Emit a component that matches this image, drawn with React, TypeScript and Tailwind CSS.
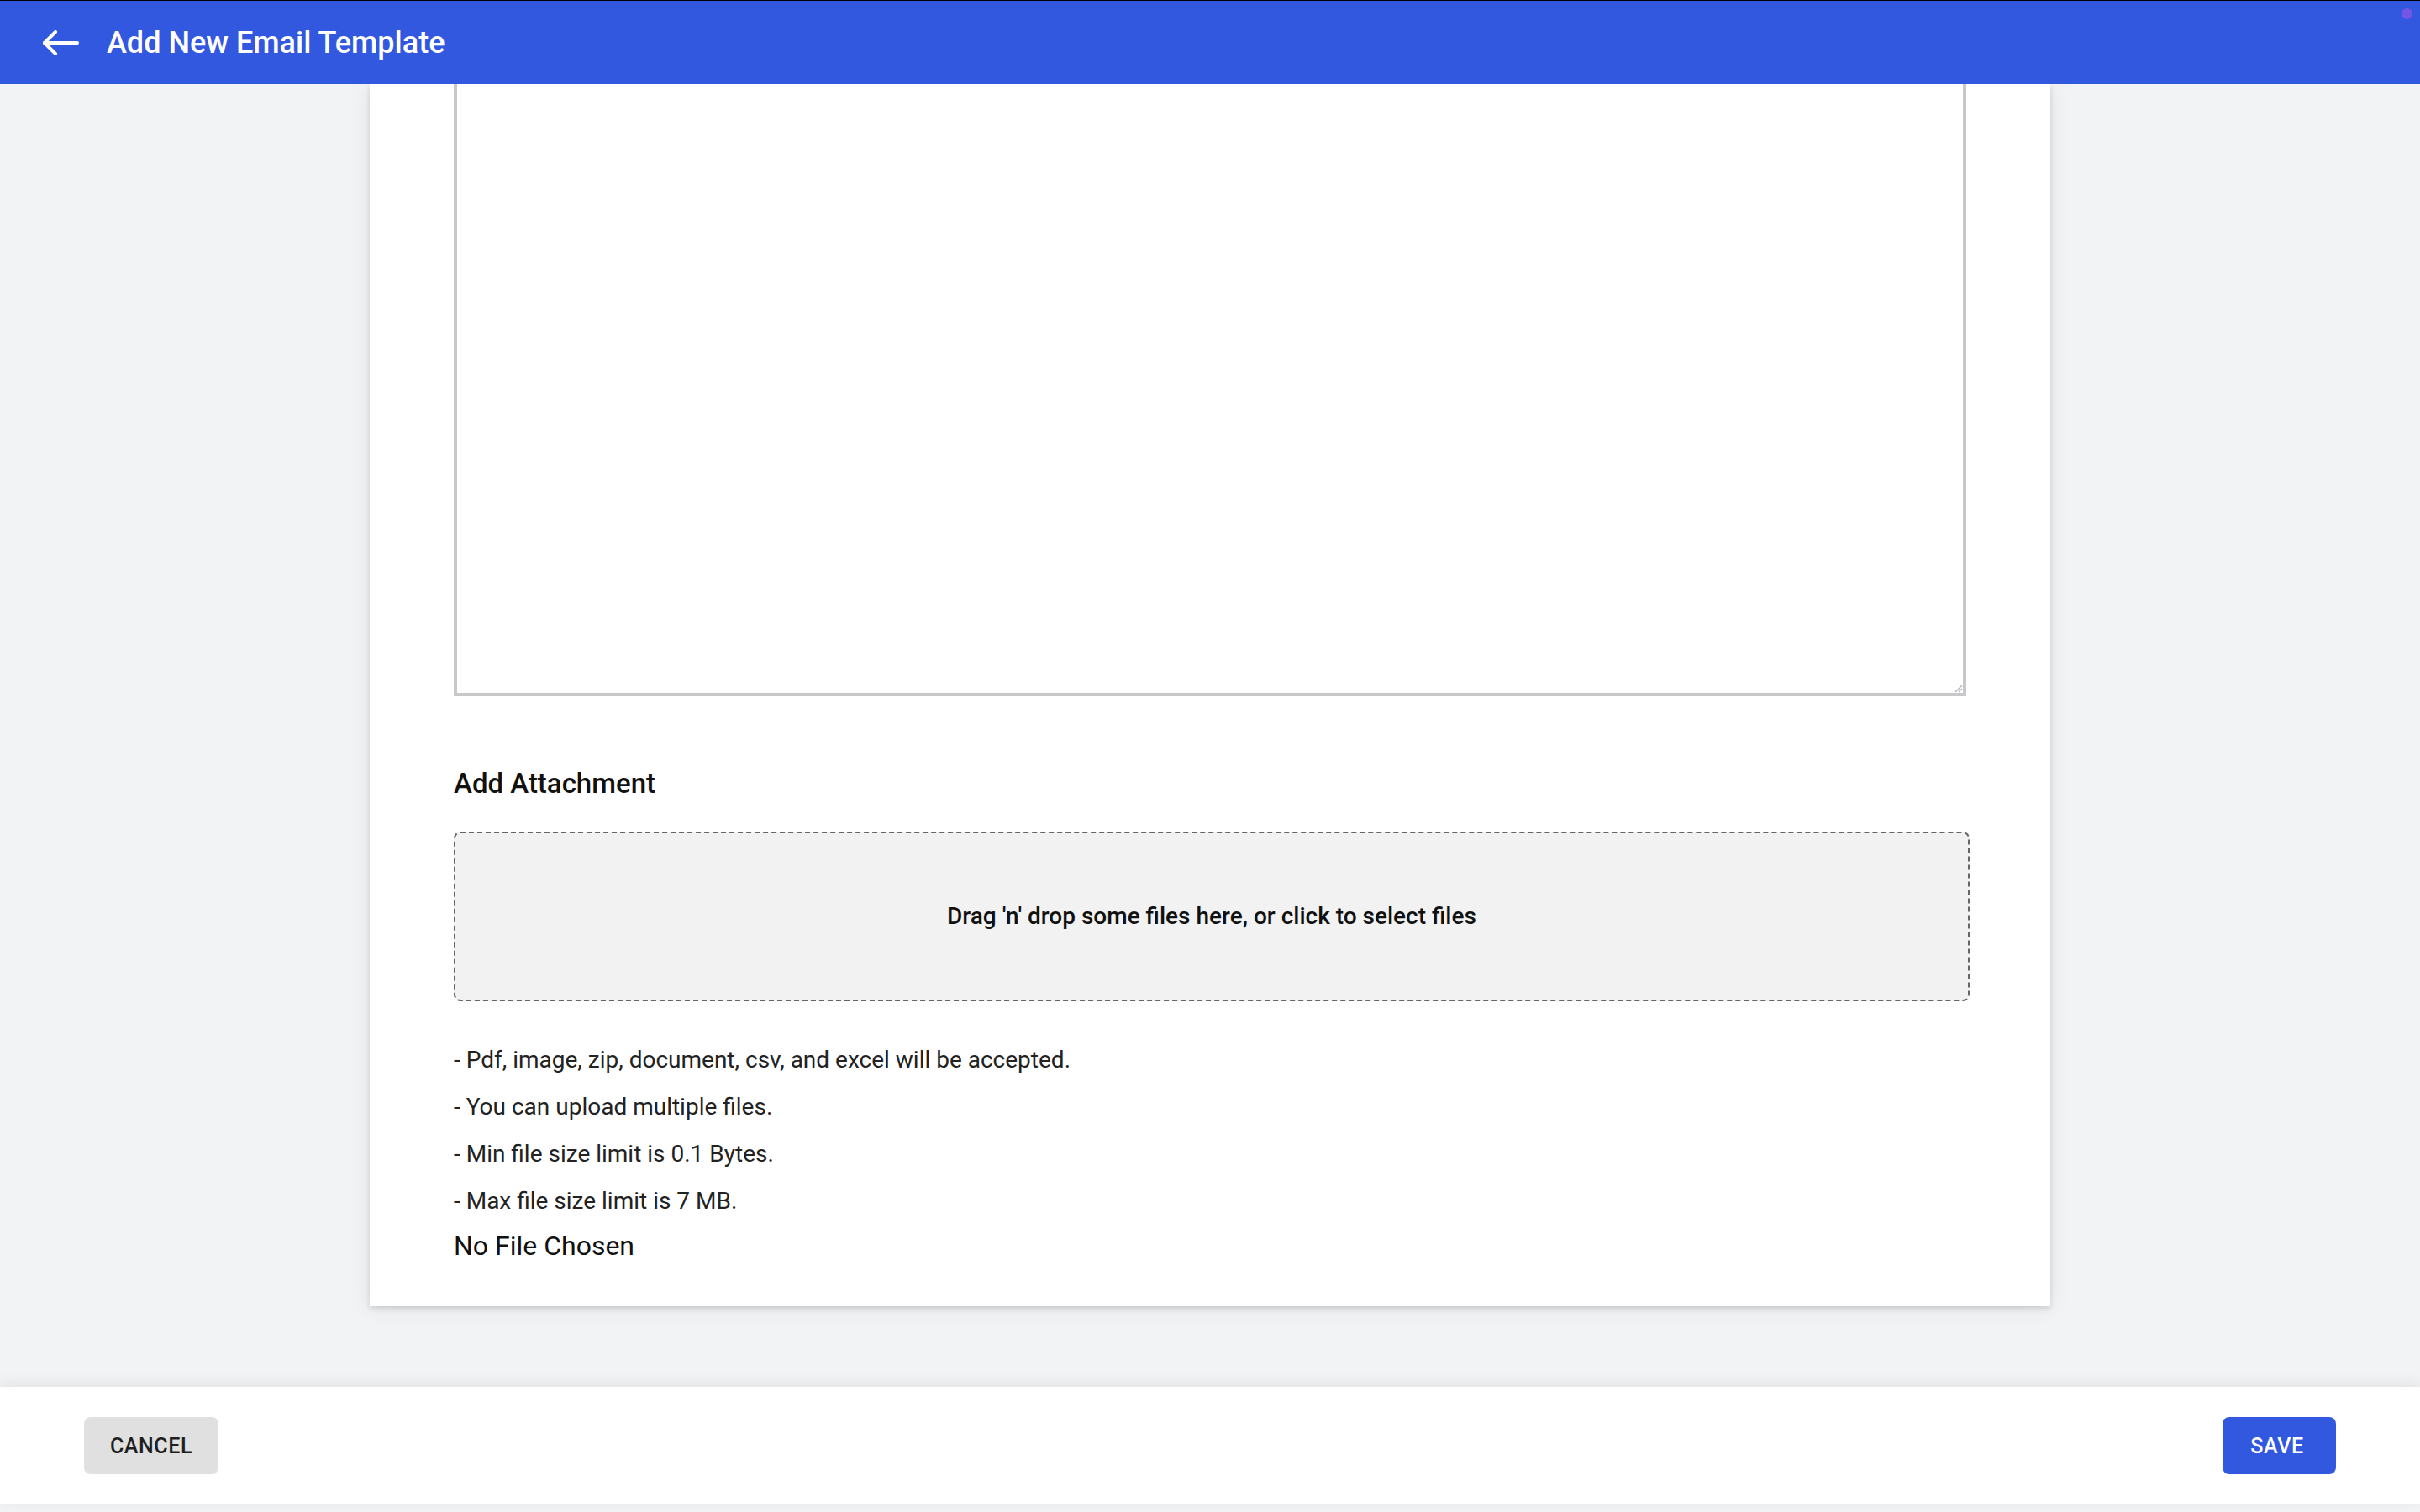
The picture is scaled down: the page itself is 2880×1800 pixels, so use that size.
import React from "react";

function BackArrow() {
  return (
    <svg width="44" height="30" viewBox="0 0 44 30" fill="none" stroke="white" strokeWidth="4" strokeLinecap="round" strokeLinejoin="round">
      <path d="M42 15H3" />
      <path d="M16 2L3 15L16 28" />
    </svg>
  );
}

function ResizeHandle() {
  return (
    <svg width="12" height="12" viewBox="0 0 12 12" stroke="#b5b5b8" strokeWidth="1.5" fill="none">
      <path d="M11 3L3 11" />
      <path d="M11 7L7 11" />
    </svg>
  );
}

export default function App() {
  const bullets = [
    "- Pdf, image, zip, document, csv, and excel will be accepted.",
    "- You can upload multiple files.",
    "- Min file size limit is 0.1 Bytes.",
    "- Max file size limit is 7 MB.",
  ];
  return (
    <div className="w-[2880px] h-[1800px] flex flex-col bg-[#f2f3f5] overflow-hidden font-['Roboto','Liberation_Sans',sans-serif]">
      <header className="relative z-20 h-[100px] shrink-0 bg-[#3358e0] border-t border-black flex items-center">
        <div className="ml-[50px] flex items-center">
          <BackArrow />
        </div>
        <h1 className="ml-[33px] text-white text-[36px] font-medium leading-none">Add New Email Template</h1>
        <span className="absolute right-[9px] top-[9px] w-[13px] h-[13px] rounded-full bg-[#7357e4]" />
      </header>

      <main className="relative z-0 flex-1 min-h-0 overflow-hidden">
        <div className="w-[2000px] mx-auto bg-white px-[100px] pb-[48px] shadow-[0_3px_6px_rgba(0,0,0,0.12),0_2px_24px_rgba(0,0,0,0.08)]">
          <div className="relative h-[729px] border-x-4 border-b-4 border-[#c8c8cb]">
            <span className="absolute right-0 bottom-0">
              <ResizeHandle />
            </span>
          </div>

          <h2 className="mt-[80px] text-[33px] leading-[48px] font-medium text-[#111]">Add Attachment</h2>

          <div className="mt-[33px] w-[1804px] h-[202px] rounded-[8px] border-2 border-dashed border-[#666] bg-[#f2f2f2] flex items-center justify-center">
            <p className="text-[28px] font-medium text-[#111]">Drag 'n' drop some files here, or click to select files</p>
          </div>

          <ul className="mt-[42px]">
            {bullets.map((b) => (
              <li key={b} className="text-[28px] leading-[56px] text-[#222]">
                {b}
              </li>
            ))}
          </ul>
          <p className="mt-[1px] text-[32px] leading-[48px] text-[#111]">No File Chosen</p>
        </div>
      </main>

      <footer className="relative z-10 h-[140px] shrink-0 bg-white flex items-center justify-between px-[100px] shadow-[0_-4px_16px_rgba(0,0,0,0.07)]">
        <button className="w-[160px] h-[68px] pt-[2px] rounded-[8px] bg-[#e0e0e0] text-[#1f1f1f] text-[25px] font-medium tracking-[0.6px] uppercase">
          Cancel
        </button>
        <button className="w-[135px] h-[68px] pt-[2px] pr-[5px] rounded-[8px] bg-[#3358e0] text-white text-[25px] font-medium tracking-[0.6px] uppercase">
          Save
        </button>
      </footer>
      <div className="h-[9px] shrink-0 bg-[#f2f3f5]" />
    </div>
  );
}
